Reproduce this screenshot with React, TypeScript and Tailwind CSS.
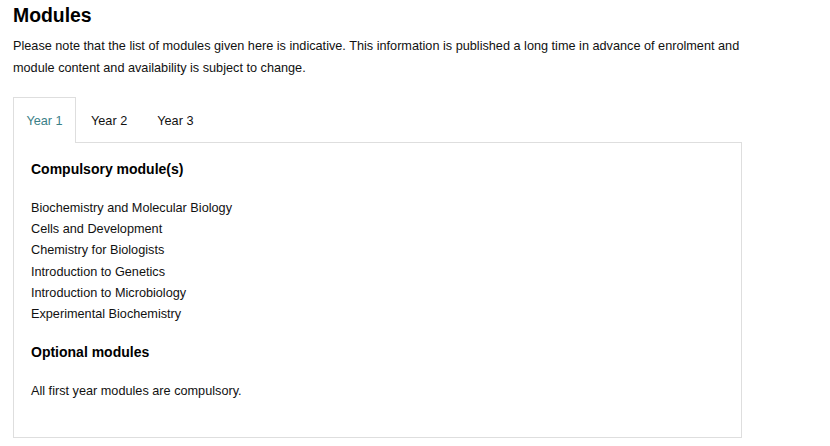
const compulsory = [
  "Biochemistry and Molecular Biology",
  "Cells and Development",
  "Chemistry for Biologists",
  "Introduction to Genetics",
  "Introduction to Microbiology",
  "Experimental Biochemistry",
];

const tabs = ["Year 1", "Year 2", "Year 3"];

export default function App() {
  return (
    <div className="w-[830px] h-[446px] bg-white text-black pl-[13px] pt-[2px] font-['Liberation_Sans',Arial,sans-serif] overflow-hidden">
      <h2 className="text-[19.4px] leading-[26px] font-bold">Modules</h2>
      <p className="mt-[7px] text-[12.7px] leading-[22px] w-[745px] text-[#111]">
        Please note that the list of modules given here is indicative. This information is published a long time in advance of enrolment and module content and availability is subject to change.
      </p>

      {/* tab bar */}
      <div className="mt-[18px] w-[729px] flex">
        {tabs.map((t, i) =>
          i === 0 ? (
            <div
              key={t}
              className="h-[46px] w-[63px] border border-b-0 border-[#dedede] bg-white flex items-center justify-center pt-[3px] text-[12.7px] text-[#3b8088] relative z-10 -mb-px"
            >
              {t}
            </div>
          ) : (
            <div key={t} className="h-[45px] px-[15px] pt-[5px] flex items-center text-[12.7px] text-[#111]">
              {t}
            </div>
          )
        )}
      </div>

      {/* panel */}
      <div className="w-[729px] h-[296px] border border-[#dedede] pl-[17px] pt-[16px]">
        <h3 className="text-[14px] leading-[20px] font-bold">Compulsory module(s)</h3>
        <ul className="mt-[19px] text-[12.7px] leading-[21.2px] text-[#111]">
          {compulsory.map((m) => (
            <li key={m}>{m}</li>
          ))}
        </ul>
        <h3 className="mt-[17px] text-[14px] leading-[20px] font-bold">Optional modules</h3>
        <p className="mt-[19px] text-[12.7px] leading-[21px] text-[#111]">All first year modules are compulsory.</p>
      </div>
    </div>
  );
}
